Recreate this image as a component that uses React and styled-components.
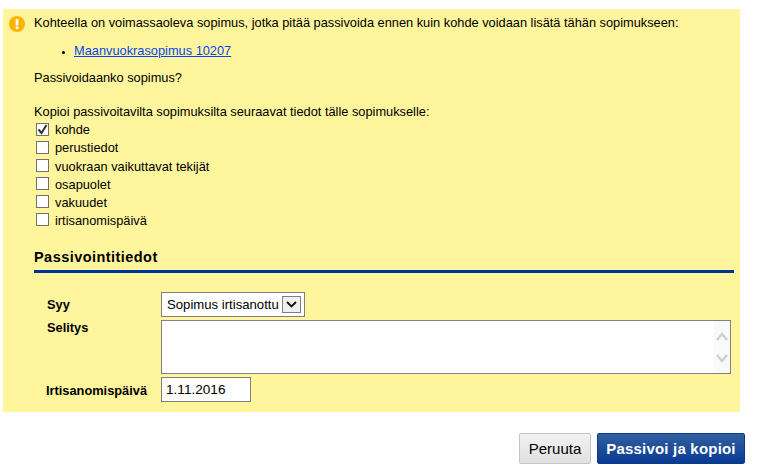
import React from 'react'
import styled, { createGlobalStyle } from 'styled-components'

const GlobalStyle = createGlobalStyle`
  html, body {
    margin: 0;
    padding: 0;
    background: #fff;
  }
  body {
    font-family: "Liberation Sans", Arial, sans-serif;
    font-size: 12.8px;
    color: #000;
  }
`

const Page = styled.div`
  width: 776px;
  height: 476px;
  overflow: hidden;
  padding: 9px 0 0 3px;
  box-sizing: border-box;
`

const Notice = styled.div`
  width: 737px;
  height: 403px;
  background: #fff59d;
  padding: 7px 6px 0 31px;
  box-sizing: border-box;
  position: relative;
`

const WarnIcon = styled.svg`
  position: absolute;
  left: 6px;
  top: 7px;
`

const Text = styled.div`
  line-height: 14px;
  margin-top: ${p => p.$top || 0}px;
`

const LinkList = styled.ul`
  margin: 14px 0 0;
  padding: 0 0 0 40px;
  line-height: 14px;

  li::marker {
    font-size: 9px;
  }
`

const BlueLink = styled.a`
  color: #0645f5;
  text-decoration: underline;
`

const CheckList = styled.div`
  margin-top: 2px;
`

const CheckRow = styled.label`
  display: flex;
  align-items: center;
  gap: 6px;
  height: ${p => p.$height}px;
  padding-left: 2px;
`

const Box = styled.span`
  width: 13px;
  height: 13px;
  box-sizing: border-box;
  border: 1px solid #707070;
  background: #fff;
  display: flex;
  align-items: center;
  justify-content: center;
  margin-top: -1px;
`

const SectionTitle = styled.h2`
  margin: 20px 0 0;
  font-size: 14.5px;
  line-height: 16px;
  font-weight: bold;
  padding-bottom: 5px;
  border-bottom: 3px solid #003399;
  letter-spacing: 0.45px;
`

const FormGrid = styled.div`
  display: grid;
  grid-template-columns: 127px 1fr;
  margin-top: 19px;
  padding-right: 3px;
  row-gap: 3px;
`

const Label = styled.div`
  font-weight: bold;
  padding-left: ${p => p.$left || 13}px;
  padding-top: ${p => p.$pad || 0}px;
`

const SelectBox = styled.div`
  width: 144px;
  height: 25px;
  box-sizing: border-box;
  border: 1px solid #808080;
  background: #fff;
  display: flex;
  align-items: center;
  justify-content: space-between;
  padding: 0 3px 0 5px;
`

const SelectText = styled.span`
  white-space: nowrap;
  font-size: 13.15px;
`

const SelectArrow = styled.span`
  width: 19px;
  height: 17px;
  box-sizing: border-box;
  border: 1px solid #808080;
  background: #f0f0f0;
  display: flex;
  align-items: center;
  justify-content: center;
`

const TextBox = styled.div`
  height: 54px;
  box-sizing: border-box;
  border: 1px solid #808080;
  background: #fff;
  display: flex;
  justify-content: flex-end;
`

const ScrollBar = styled.div`
  width: 16px;
  background: #f9f9f9;
  display: flex;
  flex-direction: column;
  justify-content: space-between;
  align-items: center;
  padding: 11px 0 10px;
`

const DateInput = styled.div`
  width: 90px;
  height: 25px;
  box-sizing: border-box;
  border: 1px solid #808080;
  background: #fff;
  display: flex;
  align-items: center;
  padding-left: 4px;
  font-size: 13.6px;
`

const Actions = styled.div`
  display: flex;
  justify-content: flex-end;
  gap: 6px;
  width: 742px;
  margin-top: 21px;
`

const Button = styled.button`
  width: ${p => (p.$primary ? 148 : 72)}px;
  height: 31px;
  box-sizing: border-box;
  border-radius: 2px;
  font-family: inherit;
  font-size: 15px;
  padding: 0;
  white-space: nowrap;
  letter-spacing: ${p => (p.$primary ? '0.2px' : '0')};
  border: 1px solid ${p => (p.$primary ? '#0d3b8c' : '#c4c4c4')};
  color: ${p => (p.$primary ? '#fff' : '#000')};
  font-weight: ${p => (p.$primary ? 'bold' : 'normal')};
  background: ${p =>
    p.$primary
      ? 'linear-gradient(#32609f, #0a3a94)'
      : 'linear-gradient(#f2f2f2, #e0e0e0)'};
`

const Chevron = ({ up }) => (
  <svg width="12" height="9" viewBox="0 0 12 9">
    <path
      d={up ? 'M1 8 L6 2 L11 8' : 'M1 1 L6 7 L11 1'}
      fill="none"
      stroke="#cfcfcf"
      strokeWidth="2.4"
    />
  </svg>
)

const options = [
  { name: 'kohde', checked: true, height: 17 },
  { name: 'perustiedot', height: 19 },
  { name: 'vuokraan vaikuttavat tekijät', height: 18 },
  { name: 'osapuolet', height: 18 },
  { name: 'vakuudet', height: 18 },
  { name: 'irtisanomispäivä', height: 18 },
]

export default function App() {
  return (
    <Page>
      <GlobalStyle />
      <Notice>
        <WarnIcon width="16" height="16" viewBox="0 0 16 16">
          <circle cx="8" cy="8" r="8" fill="#fdb300" />
          <rect x="6.6" y="3" width="2.8" height="6.5" rx="0.8" fill="#fff" />
          <rect x="6.6" y="10.6" width="2.8" height="2.4" rx="0.6" fill="#fff" />
        </WarnIcon>
        <Text>
          Kohteella on voimassaoleva sopimus, jotka pitää passivoida ennen kuin kohde voidaan lisätä tähän sopimukseen:
        </Text>
        <LinkList>
          <li>
            <BlueLink href="#">Maanvuokrasopimus 10207</BlueLink>
          </li>
        </LinkList>
        <Text $top={13}>Passivoidaanko sopimus?</Text>
        <Text $top={20}>Kopioi passivoitavilta sopimuksilta seuraavat tiedot tälle sopimukselle:</Text>
        <CheckList>
          {options.map(({ name, checked, height }) => (
            <CheckRow key={name} $height={height}>
              <Box>
                {checked && (
                  <svg width="11" height="11" viewBox="0 0 11 11">
                    <path d="M1.5 5.5 L4.5 9 L9.5 1" fill="none" stroke="#333" strokeWidth="2" />
                  </svg>
                )}
              </Box>
              {name}
            </CheckRow>
          ))}
        </CheckList>
        <SectionTitle>Passivointitiedot</SectionTitle>
        <FormGrid>
          <Label $pad={5}>Syy</Label>
          <SelectBox>
            <SelectText>Sopimus irtisanottu</SelectText>
            <SelectArrow>
              <svg width="11" height="7" viewBox="0 0 11 7">
                <path d="M1 1 L5.5 5.5 L10 1" fill="none" stroke="#111" strokeWidth="1.8" />
              </svg>
            </SelectArrow>
          </SelectBox>
          <Label>Selitys</Label>
          <TextBox>
            <ScrollBar>
              <Chevron up />
              <Chevron />
            </ScrollBar>
          </TextBox>
          <Label $left={12} $pad={6}>Irtisanomispäivä</Label>
          <DateInput>1.11.2016</DateInput>
        </FormGrid>
      </Notice>
      <Actions>
        <Button>Peruuta</Button>
        <Button $primary>Passivoi ja kopioi</Button>
      </Actions>
    </Page>
  )
}
